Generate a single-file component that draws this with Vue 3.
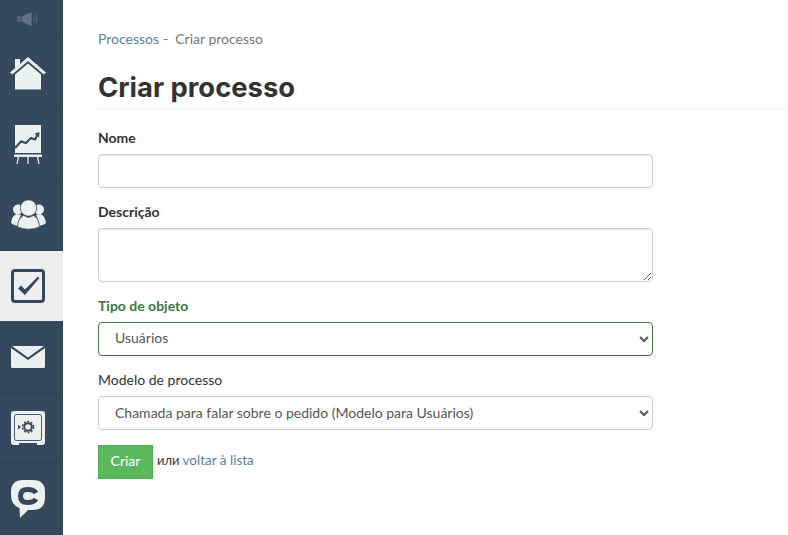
<script setup>
const nav = ['home', 'chart', 'users', 'check', 'mail', 'safe', 'chat']
</script>

<template>
  <div class="page">
    <nav class="side">
      <div class="item top">
        <svg width="22" height="16" viewBox="0 0 24 16" class="spk">
          <rect x="0" y="5" width="5" height="6" fill="#55687c"/>
          <path d="M5.500 5 L15 .5 Q16 .5 16 1.500 V14.500 Q16 15.500 15 15.500 L5.500 11 Z" fill="#5f7285"/>
          <path d="M18 5 Q19.200 8 18 11 M20.500 3 Q22.600 8 20.500 13" fill="none" stroke="#55687c" stroke-width="1.200"/>
        </svg>
      </div>
      <a v-for="n in nav" :key="n" class="item" :class="{ active: n === 'check' }">
        <svg v-if="n === 'home'" width="36" height="34" viewBox="0 0 36 34">
          <path d="M5 1 H10 V6 L5 10.500 Z" fill="#ecf0f1" transform="translate(0 2)"/>
          <path d="M0 16.500 L18 1 L36 16.500 L33.800 18.500 L18 5 L2.200 18.500 Z" fill="#ecf0f1"/>
          <path d="M5 18.500 L18 7.500 L31 18.500 V33.500 H5 Z" fill="#ecf0f1"/>
        </svg>
        <svg v-else-if="n === 'chart'" width="28" height="39" viewBox="0 0 28 39">
          <rect x="1" y="0" width="26" height="28" fill="#ecf0f1"/>
          <path d="M1 23 L7 16.500 L12 18 L17 13 L21 14.500 L24 9" fill="none" stroke="#34495e" stroke-width="2"/>
          <path d="M25.500 7 L20.500 8.500 L25 12.500 Z" fill="#34495e"/>
          <rect x="0" y="29.500" width="28" height="2.500" fill="#ecf0f1"/>
          <path d="M4.500 32 L3 39 M14 32 V39 M23.500 32 L25 39" stroke="#ecf0f1" stroke-width="1.200"/>
        </svg>
        <svg v-else-if="n === 'users'" width="35" height="30" viewBox="0 0 35 30">
          <circle cx="7" cy="9.500" r="5" fill="#ecf0f1"/>
          <circle cx="28" cy="9.500" r="5" fill="#ecf0f1"/>
          <path d="M0 23 Q1 15 6 14 L10 15 Q7 20 7 26 Q2 25 0 23 Z" fill="#ecf0f1"/>
          <path d="M35 23 Q34 15 29 14 L25 15 Q28 20 28 26 Q33 25 35 23 Z" fill="#ecf0f1"/>
          <circle cx="17.500" cy="8" r="8.200" fill="#ecf0f1" stroke="#34495e" stroke-width=".8"/>
          <path d="M6.500 27 Q7 18 12.500 15.500 L17.500 17.500 L22.500 15.500 Q28 18 28.500 27 Q17.500 31.500 6.500 27 Z" fill="#ecf0f1" stroke="#34495e" stroke-width=".8"/>
        </svg>
        <svg v-else-if="n === 'check'" width="34" height="34" viewBox="0 0 34 34">
          <rect x="1.500" y="1.500" width="31" height="31" rx="2.500" fill="none" stroke="#34495e" stroke-width="3"/>
          <path d="M7 19.500 L10 16.500 L14 20.500 L27 7.500 L28.500 9 L14 26 Z" fill="#34495e"/>
        </svg>
        <svg v-else-if="n === 'mail'" width="34" height="22" viewBox="0 0 34 22">
          <path d="M1 0 H33 L17 11.500 Z" fill="#ecf0f1"/>
          <path d="M0 2 L17 14 L34 2 V20.500 Q34 22 32.500 22 H1.500 Q0 22 0 20.500 Z" fill="#ecf0f1"/>
        </svg>
        <svg v-else-if="n === 'safe'" width="34" height="34" viewBox="0 0 34 34">
          <rect x="0" y="0" width="34" height="34" rx="3" fill="#ecf0f1"/>
          <rect x="8" y="32" width="18" height="2" fill="#34495e"/>
          <rect x="3.500" y="3.500" width="27" height="26" rx="2" fill="none" stroke="#34495e" stroke-width=".9"/>
          <circle cx="17" cy="16" r="3.800" fill="none" stroke="#34495e" stroke-width="2"/>
          <circle cx="17" cy="16" r="5.500" fill="none" stroke="#34495e" stroke-width="1.500" stroke-dasharray="2 1.500"/>
          <path d="M7 13.500 L10 16 L7 18.500 Z" fill="#34495e"/>
        </svg>
        <svg v-else width="34" height="38" viewBox="0 0 34 38">
          <path d="M12 0 H22 Q34 0 34 12 V17 Q34 30 22 30 H17 L9 38 L8.500 28 Q0 25 0 15 V12 Q0 0 12 0 Z" fill="#ecf0f1"/>
          <path d="M25 13 Q23 9.500 16.500 9.500 Q9.500 9.500 9.500 16 Q9.500 22.500 16.500 22.500 Q23 22.500 25 19" fill="none" stroke="#34495e" stroke-width="5"/>
        </svg>
      </a>
    </nav>

    <main class="main">
      <div class="crumbs"><a class="link">Processos</a><span class="sep">-</span><span class="cur">Criar processo</span></div>
      <h1 class="title">Criar processo</h1>
      <form class="form" @submit.prevent>
        <label class="lab strong">Nome</label>
        <input class="ctl input" type="text" />
        <label class="lab strong l2">Descrição</label>
        <textarea class="ctl area"></textarea>
        <label class="lab strong ok l3">Tipo de objeto</label>
        <select class="ctl sel okb"><option>Usuários</option></select>
        <label class="lab l4">Modelo de processo</label>
        <select class="ctl sel model"><option>Chamada para falar sobre o pedido (Modelo para Usuários)</option></select>
        <div class="actions">
          <button class="btn" type="submit">Criar</button>
          <span class="or">или</span>
          <a class="link back">voltar à lista</a>
        </div>
      </form>
    </main>
  </div>
</template>

<style>
html, body { margin: 0; background: #fff; overflow: hidden; }
</style>

<style scoped>
.page { display: flex; height: 535px; font-family: Lato, "Liberation Sans", sans-serif; font-size: 14px; color: #333; }
.side { width: 63px; flex: none; background: #34495e; display: flex; flex-direction: column; overflow: hidden; }
.item { height: 70px; flex: none; display: flex; align-items: center; justify-content: center; padding-right: 7px; border-bottom: 1px solid #2f4257; }
.item.top { height: 37px; }
.item.active { background: #eee; border-bottom-color: #34495e; }
.main { flex: 1; padding: 30px 0 0 35px; min-width: 0; }
.crumbs { height: 17px; line-height: 17px; font-size: 14px; color: #777; display: flex; }
.sep { margin: 0 7px 0 4px; }
.link { color: #5a7fa3; }
.title { margin: 21px 0 0; padding-bottom: 4px; height: 36px; line-height: 38px; font-family: Inter, Lato, sans-serif; font-size: 27.4px; font-weight: 700; color: #333; border-bottom: 1px solid #eee; }
.form { width: 555px; margin-top: 20px; display: flex; flex-direction: column; }
.lab { height: 17px; line-height: 17px; margin-bottom: 8px; color: #333; }
.strong { font-weight: 700; }
.ok { color: #3c763d; }
.l2, .l3, .l4 { margin-top: 15px; }
.ctl { box-sizing: border-box; width: 555px; border: 1px solid #ccc; border-radius: 4px; background: #fff; font: inherit; font-weight: 400; color: #555; box-shadow: inset 0 1px 1px rgba(0,0,0,.075); outline: none; display: block; }
.input { height: 34px; padding: 6px 12px; }
.area { height: 54px; padding: 6px 12px; }
.sel { height: 34px; padding: 4px 12px 8px; box-shadow: none; }
.sel.model { padding: 5px 12px 7px; }
.okb { border-color: #3c763d; }
.actions { margin-top: 15px; display: flex; align-items: center; height: 34px; }
.btn { box-sizing: border-box; height: 34px; width: 55px; border: 1px solid #4cae4c; background: #5cb85c; color: #fff; font: inherit; padding: 0 0 4px; }
.or { margin: -4px 3px 0 4px; color: #333; font-size: 13px; }
.back { margin-top: -4px; font-size: 13.5px; }
</style>
